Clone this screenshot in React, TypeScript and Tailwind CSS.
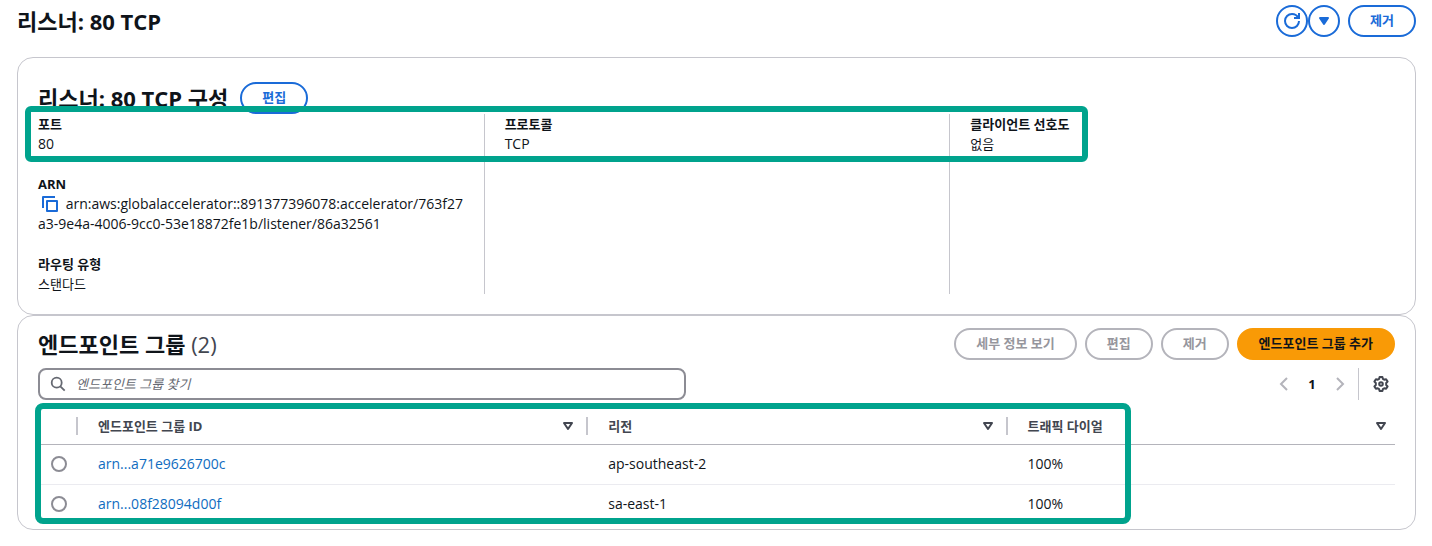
import React from "react"
import clsx from "clsx"

type EndpointGroup = {
  id: string
  region: string
  dial: string
}

const groups: EndpointGroup[] = [
  { id: "arn...a71e9626700c", region: "ap-southeast-2", dial: "100%" },
  { id: "arn...08f28094d00f", region: "sa-east-1", dial: "100%" },
]

const columns = ["엔드포인트 그룹 ID", "리전", "트래픽 다이얼"]

const buttonVariants = {
  normal: "border-[#1a6bd8] text-[#1a6bd8]",
  disabled: "border-[#b4b4bb] text-[#96969d]",
  primary: "border-[#f99a06] bg-[#f99a06] text-[#0f141a]",
}

function Button({
  variant = "normal",
  children,
}: {
  variant?: keyof typeof buttonVariants
  children: React.ReactNode
}) {
  return (
    <button
      type="button"
      disabled={variant === "disabled"}
      className={clsx(
        "flex h-8 shrink-0 items-center rounded-full border-2 px-5 pb-0.5 font-bold whitespace-nowrap",
        buttonVariants[variant]
      )}
    >
      {children}
    </button>
  )
}

function IconButton({
  label,
  children,
}: {
  label: string
  children: React.ReactNode
}) {
  return (
    <button
      type="button"
      aria-label={label}
      className="flex size-8 items-center justify-center rounded-full border-2 border-[#1a6bd8] text-[#1a6bd8]"
    >
      {children}
    </button>
  )
}

function Field({
  label,
  latin,
  children,
}: {
  label: string
  latin?: boolean
  children: React.ReactNode
}) {
  return (
    <div>
      <dt className="font-bold">{label}</dt>
      <dd className={clsx("break-all", latin && "text-sm leading-5")}>{children}</dd>
    </div>
  )
}

function RefreshIcon() {
  return (
    <svg viewBox="0 0 16 16" className="size-4" fill="none" stroke="currentColor" strokeWidth="2">
      <path d="M15 8c0 3.87-3.13 7-7 7s-7-3.13-7-7 3.13-7 7-7c2.79 0 5.2 1.63 6.33 4" />
      <path d="M10 5h5V0" />
    </svg>
  )
}

function CopyIcon() {
  return (
    <svg viewBox="0 0 16 16" className="size-4" fill="none" stroke="currentColor" strokeWidth="2" strokeLinejoin="round">
      <path d="M15 5H5v10h10V5Z" />
      <path d="M13 1H1v11" />
    </svg>
  )
}

function SearchIcon() {
  return (
    <svg viewBox="0 0 16 16" className="size-4 shrink-0" fill="none" stroke="currentColor" strokeWidth="1.8">
      <circle cx="6.7" cy="6.7" r="5" />
      <path d="m10.3 10.3 4.4 4.4" />
    </svg>
  )
}

function GearIcon() {
  return (
    <svg viewBox="0 0 16 16" className="size-4" fill="none" stroke="currentColor" strokeWidth="2" strokeLinejoin="round">
      <path d="M9.4 1H6.6L6.1 2.9 4.8 3.7 2.9 3.2 1.4 5.6 2.8 7v2L1.4 10.4l1.5 2.4 1.9-.5 1.3.8.5 1.9h2.8l.5-1.9 1.3-.8 1.9.5 1.5-2.4L13.2 9V7l1.4-1.4-1.5-2.4-1.9.5-1.3-.8L9.4 1Z" />
      <circle cx="8" cy="8" r="1.8" />
    </svg>
  )
}

function Chevron({ direction }: { direction: "left" | "right" }) {
  return (
    <svg viewBox="0 0 16 16" className="size-4" fill="none" stroke="currentColor" strokeWidth="2">
      <path d={direction === "left" ? "M11 2 5 8l6 6" : "m5 2 6 6-6 6"} />
    </svg>
  )
}

function SortIcon({ filled }: { filled?: boolean }) {
  return (
    <svg viewBox="0 0 16 16" className="size-4" fill={filled ? "currentColor" : "none"} stroke="currentColor" strokeWidth="2" strokeLinejoin="round">
      <path d="M4 5h8l-4 6-4-6Z" />
    </svg>
  )
}

export default function App() {
  return (
    <main className="min-h-screen bg-white pt-[5px] pr-4 pb-4 pl-[17px] font-['Open_Sans','Noto_Sans_CJK_KR',sans-serif] text-[13px] leading-5 text-[#0f141a]">
      <header className="flex h-8 items-center justify-between">
        <h1 className="text-[22px] leading-8 font-bold">리스너: 80 TCP</h1>
        <div className="flex">
          <IconButton label="새로 고침">
            <RefreshIcon />
          </IconButton>
          <IconButton label="새로 고침 옵션">
            <SortIcon filled />
          </IconButton>
          <div className="ml-2 flex">
            <Button>제거</Button>
          </div>
        </div>
      </header>

      {/* Listener configuration */}
      <section className="mt-5 rounded-2xl border border-[#c6c6cd] px-5 pt-6 pb-5">
        <div className="flex h-8 items-center gap-3">
          <h2 className="text-[22px] leading-8 font-bold">리스너: 80 TCP 구성</h2>
          <Button>편집</Button>
        </div>
        <div className="relative -mx-5">
          <dl className="grid grid-cols-3">
            <div className="flex flex-col gap-5 px-5">
              <Field label="포트" latin>80</Field>
              <Field label="ARN" latin>
                <button type="button" aria-label="ARN 복사" className="mx-1 mt-0.5 inline-block h-4 align-text-top text-[#1a6bd8]">
                  <CopyIcon />
                </button>{" "}
                arn:aws:globalaccelerator::891377396078:accelerator/763f27a3-9e4a-4006-9cc0-53e18872fe1b/listener/86a32561
              </Field>
              <Field label="라우팅 유형">스탠다드</Field>
            </div>
            <div className="border-l border-[#c6c6cd] px-5">
              <Field label="프로토콜" latin>TCP</Field>
            </div>
            <div className="border-l border-[#c6c6cd] px-5">
              <Field label="클라이언트 선호도">없음</Field>
            </div>
          </dl>
          <div className="pointer-events-none absolute -top-2 left-[7px] h-14 w-[1063px] rounded-md border-6 border-[#00a38d]" />
        </div>
      </section>

      {/* Endpoint groups */}
      <section className="rounded-2xl border border-[#c6c6cd] px-5 pt-3 pb-[5px]">
        <div className="flex items-center justify-between">
          <h2 className="text-[22px] leading-8 font-bold">
            엔드포인트 그룹 <span className="font-normal text-[#424650]">(2)</span>
          </h2>
          <div className="flex gap-2">
            <Button variant="disabled">세부 정보 보기</Button>
            <Button variant="disabled">편집</Button>
            <Button variant="disabled">제거</Button>
            <Button variant="primary">엔드포인트 그룹 추가</Button>
          </div>
        </div>

        <div className="mt-2 flex items-center justify-between">
          <label className="flex h-8 w-[648px] items-center gap-2.5 rounded-lg border-2 border-[#8c8c94] px-2.5 text-[#656871]">
            <SearchIcon />
            <input
              type="search"
              aria-label="엔드포인트 그룹 찾기"
              placeholder="엔드포인트 그룹 찾기"
              className="min-w-0 flex-1 outline-none placeholder:text-[#656871] placeholder:italic"
            />
          </label>
          <div className="flex items-center">
            <nav aria-label="페이지" className="flex items-center gap-3 text-[#b4b4bb]">
              <button type="button" aria-label="이전 페이지" disabled>
                <Chevron direction="left" />
              </button>
              <button type="button" className="w-4 text-center font-bold text-[#0f141a]">
                1
              </button>
              <button type="button" aria-label="다음 페이지" disabled>
                <Chevron direction="right" />
              </button>
            </nav>
            <div className="ml-2.5 flex h-8 items-center border-l border-[#c6c6cd] pr-1.5 pl-3.5">
              <button type="button" aria-label="기본 설정" className="text-[#424650]">
                <GearIcon />
              </button>
            </div>
          </div>
        </div>

        <div className="relative pt-2">
          <table className="w-full table-fixed border-collapse text-left">
            <colgroup>
              <col className="w-10" />
              <col className="w-[37.6%]" />
              <col className="w-[30.9%]" />
              <col />
            </colgroup>
            <thead>
              <tr className="h-9 border-b border-[#b4b4bb] text-[#424650]">
                <th className="p-0">
                  <div className="h-[18px] border-r-2 border-[#c6c6cd]" />
                </th>
                {columns.map((name, idx) => (
                  <th key={name} className="p-0 font-bold">
                    <div
                      className={clsx(
                        "flex h-[18px] items-center justify-between pl-5",
                        idx < columns.length - 1 ? "border-r-2 border-[#c6c6cd] pr-2.5" : "pr-1.5"
                      )}
                    >
                      {name}
                      <button type="button" aria-label={`${name} 정렬`}>
                        <SortIcon />
                      </button>
                    </div>
                  </th>
                ))}
              </tr>
            </thead>
            <tbody className="text-sm leading-5">
              {groups.map((group) => (
                <tr key={group.id} className="h-10 border-b border-[#ebebf0] last:border-b-0">
                  <td className="p-0 pl-[13px]">
                    <input
                      type="radio"
                      name="endpoint-group"
                      aria-label={group.id}
                      className="block size-4 appearance-none rounded-full border-2 border-[#8c8c94] checked:border-[5px] checked:border-[#1a6bd8]"
                    />
                  </td>
                  <td className="p-0 pl-5">
                    <a href="#" className="text-[#0f6cbf]">
                      {group.id}
                    </a>
                  </td>
                  <td className="p-0 pl-5">{group.region}</td>
                  <td className="p-0 pl-5">{group.dial}</td>
                </tr>
              ))}
            </tbody>
          </table>
          <div className="pointer-events-none absolute top-[3px] -left-[3px] h-[121px] w-[1096px] rounded-lg border-6 border-[#00a38d]" />
        </div>
      </section>
    </main>
  )
}
